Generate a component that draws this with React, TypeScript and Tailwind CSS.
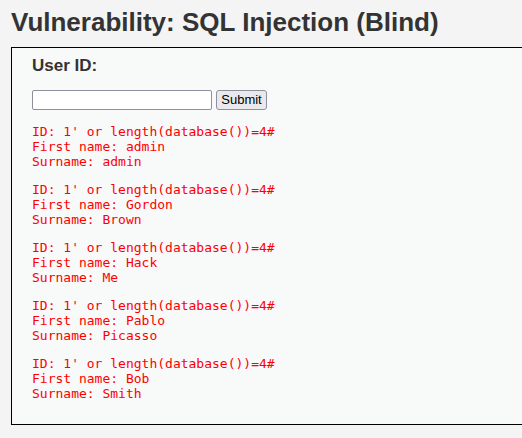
const results = [
  { first: 'admin', last: 'admin' },
  { first: 'Gordon', last: 'Brown' },
  { first: 'Hack', last: 'Me' },
  { first: 'Pablo', last: 'Picasso' },
  { first: 'Bob', last: 'Smith' },
]

const query = "1' or length(database())=4#"

export default function App() {
  return (
    <div className="min-h-[438px] w-full overflow-hidden bg-[#f4f4f4] pl-[11px] font-['Liberation_Sans',Arial,sans-serif] text-[#333]">
      <h1 className="pt-[7px] text-[26px] font-bold leading-[30px]">Vulnerability: SQL Injection (Blind)</h1>
      <div className="mt-[10px] w-[560px] border border-black bg-[#f8f9f9] px-[20px] pt-[8px] pb-[10px]">
        <form onSubmit={(e) => e.preventDefault()}>
          <p className="text-[17px] font-bold leading-[20px]">User ID:</p>
          <div className="mt-[14px] flex items-center gap-[4px]">
            <input
              type="text"
              className="h-[20px] w-[180px] rounded-[2px] border border-[#8f8f9d] bg-white px-1 text-[13px] outline-none"
            />
            <button
              type="submit"
              className="h-[20px] w-[51px] rounded-[3px] border border-[#8f8f9d] bg-[#e9e9ed] text-[13px] leading-[18px] text-black"
            >
              Submit
            </button>
          </div>
        </form>
        <div className="pt-[14px]">
          {results.map((r, i) => (
            <pre
              key={i}
              className={`font-['DejaVu_Sans_Mono',monospace] text-[13px] leading-[15px] text-[#ff0000] ${i > 0 ? 'mt-[13px]' : ''} ${i === results.length - 1 ? 'mb-[13px]' : ''}`}
            >
              {`ID: ${query}\nFirst name: ${r.first}\nSurname: ${r.last}`}
            </pre>
          ))}
        </div>
      </div>
    </div>
  )
}
